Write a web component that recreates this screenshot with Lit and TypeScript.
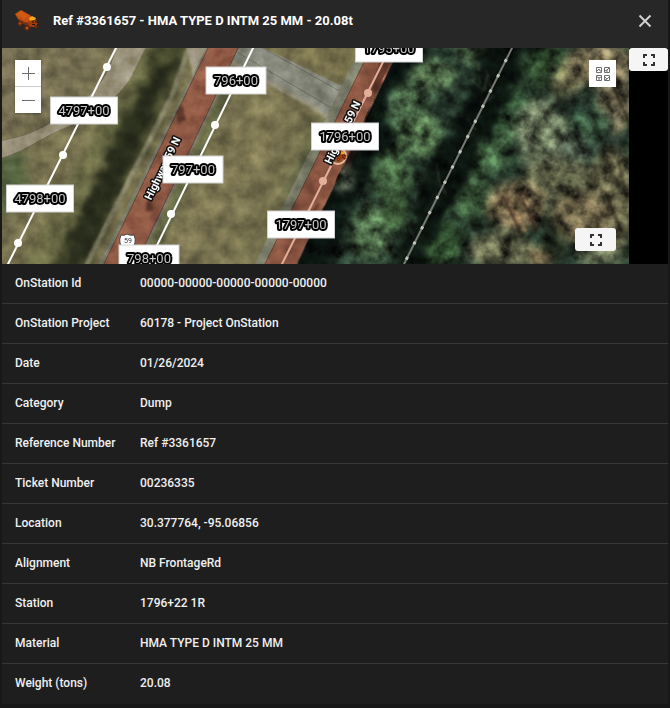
import { LitElement, html, svg, css } from "lit";
import { customElement, property } from "lit/decorators.js";

type Point = [number, number];

const details: [string, string][] = [
  ["OnStation Id", "00000-00000-00000-00000-00000"],
  ["OnStation Project", "60178 - Project OnStation"],
  ["Date", "01/26/2024"],
  ["Category", "Dump"],
  ["Reference Number", "Ref #3361657"],
  ["Ticket Number", "00236335"],
  ["Location", "30.377764, -95.06856"],
  ["Alignment", "NB FrontageRd"],
  ["Station", "1796+22 1R"],
  ["Material", "HMA TYPE D INTM 25 MM"],
  ["Weight (tons)", "20.08"],
];

const stations: { text: string; x: number; y: number }[] = [
  { text: "4797+00", x: 84, y: 110 },
  { text: "4798+00", x: 40, y: 198 },
  { text: "796+00", x: 236, y: 80 },
  { text: "797+00", x: 193, y: 169 },
  { text: "798+00", x: 149, y: 258 },
  { text: "1795+00", x: 389, y: 48 },
  { text: "1796+00", x: 345, y: 136 },
  { text: "1797+00", x: 301, y: 224 },
];

const alignments: { from: Point; to: Point; nodes: Point[]; color: string }[] = [
  { from: [118, 44], to: [6, 268], nodes: [[107, 67], [63, 155], [18, 243]], color: "#ffffff" },
  { from: [255, 44], to: [146, 268], nodes: [[215, 125], [171, 214]], color: "#ffffff" },
  { from: [392, 44], to: [280, 268], nodes: [[368, 93], [323, 181]], color: "#e3b09c" },
];

/* soft vegetation patches: x, y, rx, ry, colour, opacity */
const woods: [number, number, number, number, string, number][] = [
  [432, 76, 24, 16, "#4c6545", 0.9],
  [408, 108, 22, 24, "#425d40", 0.9],
  [420, 136, 24, 22, "#4b6845", 0.9],
  [392, 176, 20, 26, "#43613e", 0.9],
  [372, 232, 22, 28, "#486344", 0.9],
  [344, 178, 10, 14, "#5c6955", 0.8],
  [396, 214, 14, 16, "#3c5735", 0.8],
  [470, 54, 14, 10, "#42573b", 0.8],
  [545, 66, 24, 22, "#2b4229", 0.9],
  [512, 110, 20, 30, "#335035", 0.9],
  [490, 150, 26, 24, "#3d5b3d", 0.9],
  [468, 196, 24, 26, "#375336", 0.9],
  [438, 244, 26, 24, "#304c2e", 0.9],
  [600, 64, 34, 22, "#766a50", 0.9],
  [566, 84, 14, 22, "#6b6549", 0.8],
  [616, 100, 18, 34, "#655c47", 0.9],
  [542, 134, 28, 36, "#667058", 0.9],
  [590, 124, 22, 16, "#3a563f", 0.9],
  [568, 106, 14, 14, "#17251d", 0.85],
  [576, 150, 16, 16, "#4a564a", 0.8],
  [560, 180, 40, 22, "#55573f", 0.9],
  [516, 206, 30, 24, "#746549", 0.9],
  [612, 200, 24, 54, "#5e5b43", 0.9],
  [580, 218, 30, 26, "#655a41", 0.9],
  [500, 250, 34, 18, "#5a5a42", 0.9],
  [540, 258, 12, 10, "#8a7452", 0.8],
  [556, 244, 12, 20, "#1e2419", 0.8],
  [516, 156, 6, 18, "#1d2d20", 0.8],
  [600, 256, 24, 10, "#646a50", 0.8],
];

const truck = (cls: string) => svg`
  <g class=${cls}>
    <path d="M0 4 L6 0 L15 5 L17 8 L15 12 L11 13 L3 9 Z" fill="#c4500f" />
    <path d="M1 4 L6 1 L14 6 L9 9 Z" fill="#d05a16" />
    <path d="M3 9 L11 13 L13 16 L5 13 Z" fill="#7a3010" />
    <path d="M14 8 L17 6 L21 8 L20 10 L15 11 Z" fill="#f5a61c" />
    <path d="M14 11 L21 10 L23 13 L21 17 L15 17 L12 14 Z" fill="#a03c10" />
    <circle cx="5" cy="13.5" r="2.4" fill="#6b290a" /><circle cx="5" cy="13.5" r="1.1" fill="#b94d14" />
    <circle cx="12" cy="18" r="2.6" fill="#6b290a" /><circle cx="12" cy="18" r="1.2" fill="#c9551a" />
    <circle cx="21" cy="16.5" r="1.6" fill="#6b290a" />
    <path d="M17 12h2M20 12h3v1M17 14.5h3M22 14.5h1" stroke="#1d1714" fill="none" />
  </g>`;

const expandIcon = html`
  <svg width="12" height="12" viewBox="0 0 12 12" fill="none" stroke="#333" stroke-width="2" aria-hidden="true">
    <path d="M1 4V1h3M8 1h3v3M11 8v3H8M4 11H1V8" />
  </svg>`;

@customElement("aerial-map")
export class AerialMap extends LitElement {
  static styles = css`
    :host {
      display: block;
      position: relative;
      overflow: hidden;
      background: #75704f;
    }
    .scene {
      display: block;
      width: 100%;
      height: 100%;
    }
    .plate {
      fill: #fff;
      stroke: #d2d2d2;
    }
    .station,
    .street,
    .shield-text {
      font-family: Roboto, "Noto Sans", sans-serif;
      text-anchor: middle;
      paint-order: stroke;
      stroke-linejoin: round;
    }
    .station {
      font-size: 13px;
      fill: #c8c8c8;
      stroke: #000;
      stroke-width: 4px;
    }
    .street {
      font-size: 11px;
      font-weight: 700;
      fill: #fff;
      stroke: #111;
      stroke-width: 3px;
    }
    .shield-text {
      font-size: 7px;
      fill: #333;
    }
    .grain {
      mix-blend-mode: overlay;
    }
    filter {
      color-interpolation-filters: sRGB;
    }
    button {
      display: grid;
      place-items: center;
      padding: 0;
      border: 0;
      background: #fff;
      cursor: pointer;
    }
    .zoom {
      position: absolute;
      top: 12px;
      left: 13px;
      display: grid;
      gap: 1px;
      background: #ccc;
      box-shadow: 0 1px 2px rgb(0 0 0 / 30%);
    }
    .zoom button {
      width: 26px;
      height: 26px;
    }
    .basemap {
      position: absolute;
      top: 12px;
      right: 13px;
      width: 27px;
      height: 27px;
    }
    .expand {
      position: absolute;
      right: 13px;
      bottom: 13px;
      width: 41px;
      height: 23px;
      border-radius: 3px;
      background: #f5f5f5;
    }
  `;

  render() {
    return html`
      <svg class="scene" viewBox="2 48 627 216" preserveAspectRatio="xMidYMid slice" role="img" aria-label="Aerial map of the ticket location">
        <defs>
          <filter id="soft" x="-20%" y="-20%" width="140%" height="140%"><feGaussianBlur stdDeviation="5" /></filter>
          <filter id="edge" x="-20%" y="-20%" width="140%" height="140%"><feGaussianBlur stdDeviation="1.2" /></filter>
          <filter id="ragged" x="-20%" y="-20%" width="140%" height="140%">
            <feTurbulence type="fractalNoise" baseFrequency="0.07" numOctaves="4" seed="4" />
            <feDisplacementMap in="SourceGraphic" scale="24" xChannelSelector="R" yChannelSelector="G" />
            <feGaussianBlur stdDeviation="2.5" />
          </filter>
          <filter id="grass" x="0" y="0" width="100%" height="100%">
            <feTurbulence type="fractalNoise" baseFrequency="0.06" numOctaves="5" seed="8" />
            <feColorMatrix values="1 0 0 0 0  1 0 0 0 0  1 0 0 0 0  0 0 0 0 1" />
          </filter>
          <filter id="leaves" x="0" y="0" width="100%" height="100%">
            <feTurbulence type="fractalNoise" baseFrequency="0.07" numOctaves="6" seed="21" />
            <feColorMatrix values="1.3 .5 0 0 -.39  1.3 .5 0 0 -.39  1.3 .5 0 0 -.39  0 0 0 0 1" />
          </filter>
          <clipPath id="forest"><path d="M399 44 L640 44 V270 H294 Z" /></clipPath>
        </defs>

        <rect x="0" y="44" width="640" height="226" fill="#77714f" />
        <g filter="url(#soft)">
          <path d="M-10 40 H110 L90 90 L40 125 L-10 140 Z" fill="#777052" />
          <path d="M-10 155 L24 148 L30 200 L-10 220 Z" fill="#566440" />
          <path d="M145 44 H180 L50 270 H20 Z" fill="#696a45" />
          <path d="M262 80 L300 110 L180 270 H150 Z" fill="#7d7652" />
          <path d="M300 110 L335 120 L262 264 H220 Z" fill="#706b4a" />
          <path d="M318 116 L334 122 L300 200 L280 195 Z" fill="#5f6344" />
          <path d="M268 44 H368 L352 84 Z" fill="#78714c" />
        </g>
        <path d="M225 270 L320 118" stroke="#878058" stroke-width="12" opacity=".25" filter="url(#edge)" />

        <path d="M116 44 C112 70 98 94 62 116 S18 136 -4 142 V160 C30 150 40 138 68 127 S118 98 131 78 L148 44 Z" fill="#989079" stroke="#6e674f" />
        <g filter="url(#ragged)">
          <path d="M158 44 H188 L174 96 L152 142 L116 204 L84 280 H46 L92 190 L122 120 Z" fill="#45482c" />
          <path d="M160 58 L178 58 L152 116 L128 172 L84 262 H62 L90 194 L124 128 Z" fill="#262a1b" opacity=".9" />
        </g>
        <path d="M192 40 L172 96 L84 270" stroke="#7f7c62" stroke-width="5" fill="none" filter="url(#edge)" />
        <path d="M186 44 H212 L194 78 Z" fill="#9a917c" filter="url(#edge)" />
        <path d="M208 44 L96 270 L108 270 L220 44 Z" fill="#777967" />
        <path d="M242 44 L136 270 L124 270 L234 44 Z" fill="#74786a" />
        <path d="M244 44 L138 270 L150 270 L256 44 Z" fill="#59633f" opacity=".6" filter="url(#edge)" />
        <path d="M232 44 H256 L354 92 L334 120 L228 62 Z" fill="#85877a" />
        <path d="M256 44 L352 98 M230 48 L340 113" stroke="#5c6050" fill="none" opacity=".7" />
        <path d="M228 60 L310 105 L334 122" stroke="#968f76" stroke-width="5" fill="none" opacity=".7" filter="url(#edge)" />
        <path d="M210 44 L102 268 H134 L240 44 Z" fill="#8f5944" stroke="#634437" />
        <path d="M182 104 L186 120 L178 124 L176 112 Z M148 196 L154 210 L146 212 Z" fill="#4b2a20" opacity=".7" filter="url(#edge)" />

        <path d="M362 44 L252 270 H266 L374 44 Z" fill="#777966" />
        <g clip-path="url(#forest)">
          <rect x="290" y="44" width="350" height="226" fill="#223227" />
          <g filter="url(#soft)">
            <path d="M390 44 H430 L398 100 L392 150 L350 210 L330 270 H290 Z" fill="#09120e" />
            ${woods.map(([x, y, rx, ry, color, o]) => svg`<ellipse cx=${x} cy=${y} rx=${rx} ry=${ry} fill=${color} opacity=${o} />`)}
          </g>
          <path d="M484 30 H534 L512 92 L480 154 L444 218 L414 284 H390 L422 188 L434 152 L464 112 L474 76 Z" fill="#0a110d" opacity=".95" filter="url(#ragged)" />
          <path d="M472 80 l12 12 l4 -18 l-8 30 l14 -8 M436 160 l4 24 l6 10 M466 118 l10 12 M408 224 l8 18 M486 70 l6 20 M478 62 l2 22" stroke="#77776a" fill="none" opacity=".4" filter="url(#edge)" />
          <path d="M503 196 L522 236 M518 190 L537 232" stroke="#3f261c" stroke-width="2" opacity=".8" filter="url(#edge)" />
          <path d="M507 194 L526 232" stroke="#94714f" stroke-width="3" opacity=".6" filter="url(#edge)" />
          <path d="M600 56 L628 120 M618 160 L628 200 M604 190 L622 232" stroke="#261f17" stroke-width="3" opacity=".65" filter="url(#edge)" />
        </g>
        <path d="M373 44 L262 270 H294 L401 44 Z" fill="#8a5541" stroke="#5f4033" />
        <path d="M398 50 L376 94 L372 90 L382 54 Z M366 132 L345 176 L350 140 Z M320 202 L314 218 L304 216 Z" fill="#3a1c17" opacity=".55" filter="url(#edge)" />

        <rect class="grain" x="0" y="44" width="400" height="226" filter="url(#grass)" opacity=".35" />
        <rect class="grain" x="290" y="44" width="350" height="226" filter="url(#leaves)" opacity=".85" clip-path="url(#forest)" />

        <path d="M514 44 L402 268" stroke="#777a75" stroke-width="2" />
        <path d="M514 44 L402 268" stroke="#c3c5b8" stroke-width="3" stroke-dasharray="3 14" />

        ${alignments.map(
          (a) => svg`
            <line x1=${a.from[0]} y1=${a.from[1]} x2=${a.to[0]} y2=${a.to[1]} stroke=${a.color} stroke-width="2" />
            ${a.nodes.map(([x, y]) => svg`<circle cx=${x} cy=${y} r="4" fill=${a.color} />`)}`
        )}
        <circle cx="338" cy="156" r="8" fill="#8f563c" stroke="#edb993" stroke-width="2" />
        <g transform="translate(330 147) scale(.7)">${truck("marker")}</g>
        <text class="street" transform="translate(166 170) rotate(-64)">Highway 59 N</text>
        <text class="street" transform="translate(346 134) rotate(-64)">Highway 59 N</text>
        <path d="M121 235 q3 1 6 -1 q3 2 7 1 q2 4 1 8 q-1 5 -7 6 q-7 -1 -8 -6 q-1 -4 1 -8Z" fill="#fff" stroke="#444" />
        <text class="shield-text" x="128" y="243">59</text>
        ${stations.map((s) => {
          const w = s.text.length * 7 + 18;
          return svg`
            <rect class="plate" x=${s.x - w / 2} y=${s.y - 13} width=${w} height="27" />
            <text class="station" x=${s.x} y=${s.y + 5}>${s.text}</text>`;
        })}
      </svg>
      <div class="zoom">
        <button aria-label="Zoom in">
          <svg width="13" height="13" stroke="#6e6e6e" aria-hidden="true"><path d="M0 6.5h13M6.5 0v13" /></svg>
        </button>
        <button aria-label="Zoom out">
          <svg width="13" height="13" stroke="#6e6e6e" aria-hidden="true"><path d="M0 6.5h13" /></svg>
        </button>
      </div>
      <button class="basemap" aria-label="Choose basemap">
        <svg width="14" height="14" viewBox="0 0 14 14" fill="none" stroke="#6e6e6e" aria-hidden="true">
          <path d="M.5 .5h5v5h-5zM8.5 .5h5v5h-5zM.5 8.5h5v5h-5zM8.5 8.5h5v5h-5z" />
          <path d="M1 4l2-2 1 2h1M9 4l2-1 2-2M11 3v2M1 10l2 1 2-1M3 11v2M9 10l2 2 2-2M11 12l-2 1" />
        </svg>
      </button>
      <button class="expand" aria-label="Expand map">${expandIcon}</button>
    `;
  }
}

@customElement("app-root")
export class AppRoot extends LitElement {
  @property() heading = "Ref #3361657 - HMA TYPE D INTM 25 MM - 20.08t";

  static styles = css`
    :host {
      display: block;
      min-height: 100vh;
      box-sizing: border-box;
      padding: 0 2px;
      background: #181818;
      color: #f0f0f0;
      font-family: Roboto, "Noto Sans", sans-serif;
    }
    .dialog {
      background: #1e1e1e;
    }
    .bar {
      display: flex;
      align-items: center;
      height: 48px;
      box-sizing: border-box;
      padding: 0 16px 7px 13px;
      background: #272727;
    }
    .logo {
      flex: none;
      width: 24px;
      height: 21px;
      margin-right: 14px;
    }
    h1 {
      flex: 1;
      margin: 0;
      font-size: 13px;
      line-height: 20px;
      font-weight: 700;
      color: #fff;
    }
    button {
      display: grid;
      place-items: center;
      padding: 0;
      border: 0;
      background: none;
      cursor: pointer;
    }
    .close {
      width: 14px;
      height: 14px;
    }
    .map-row {
      display: flex;
      height: 216px;
      background: #000;
    }
    aerial-map {
      flex: 1;
    }
    .map-row .expand {
      width: 39px;
      height: 23px;
      border-radius: 3px;
      background: #f5f5f5;
    }
    table {
      width: 100%;
      border-collapse: separate;
      border-spacing: 0;
      table-layout: fixed;
    }
    .name-col {
      width: 125px;
    }
    th,
    td {
      box-sizing: border-box;
      height: 40px;
      padding: 0 0 2px 13px;
      border-bottom: 1px solid #383838;
      font-size: 12px;
      line-height: 16px;
      font-weight: 500;
      text-align: left;
    }
    tr:last-child > * {
      border-bottom-color: transparent;
    }
  `;

  render() {
    return html`
      <main class="dialog">
        <header class="bar">
          <svg class="logo" viewBox="0 0 24 21" aria-hidden="true">${truck("badge")}</svg>
          <h1>${this.heading}</h1>
          <button class="close" aria-label="Close">
            <svg width="14" height="14" viewBox="0 0 14 14" stroke="#d0d0d0" stroke-width="2" aria-hidden="true">
              <path d="M1.5 1.5l11 11M12.5 1.5l-11 11" />
            </svg>
          </button>
        </header>
        <div class="map-row">
          <aerial-map></aerial-map>
          <button class="expand" aria-label="Expand panel">${expandIcon}</button>
        </div>
        <table>
          <colgroup><col class="name-col" /><col /></colgroup>
          <tbody>
            ${details.map(([name, value]) => html`<tr><th scope="row">${name}</th><td>${value}</td></tr>`)}
          </tbody>
        </table>
      </main>
    `;
  }
}
